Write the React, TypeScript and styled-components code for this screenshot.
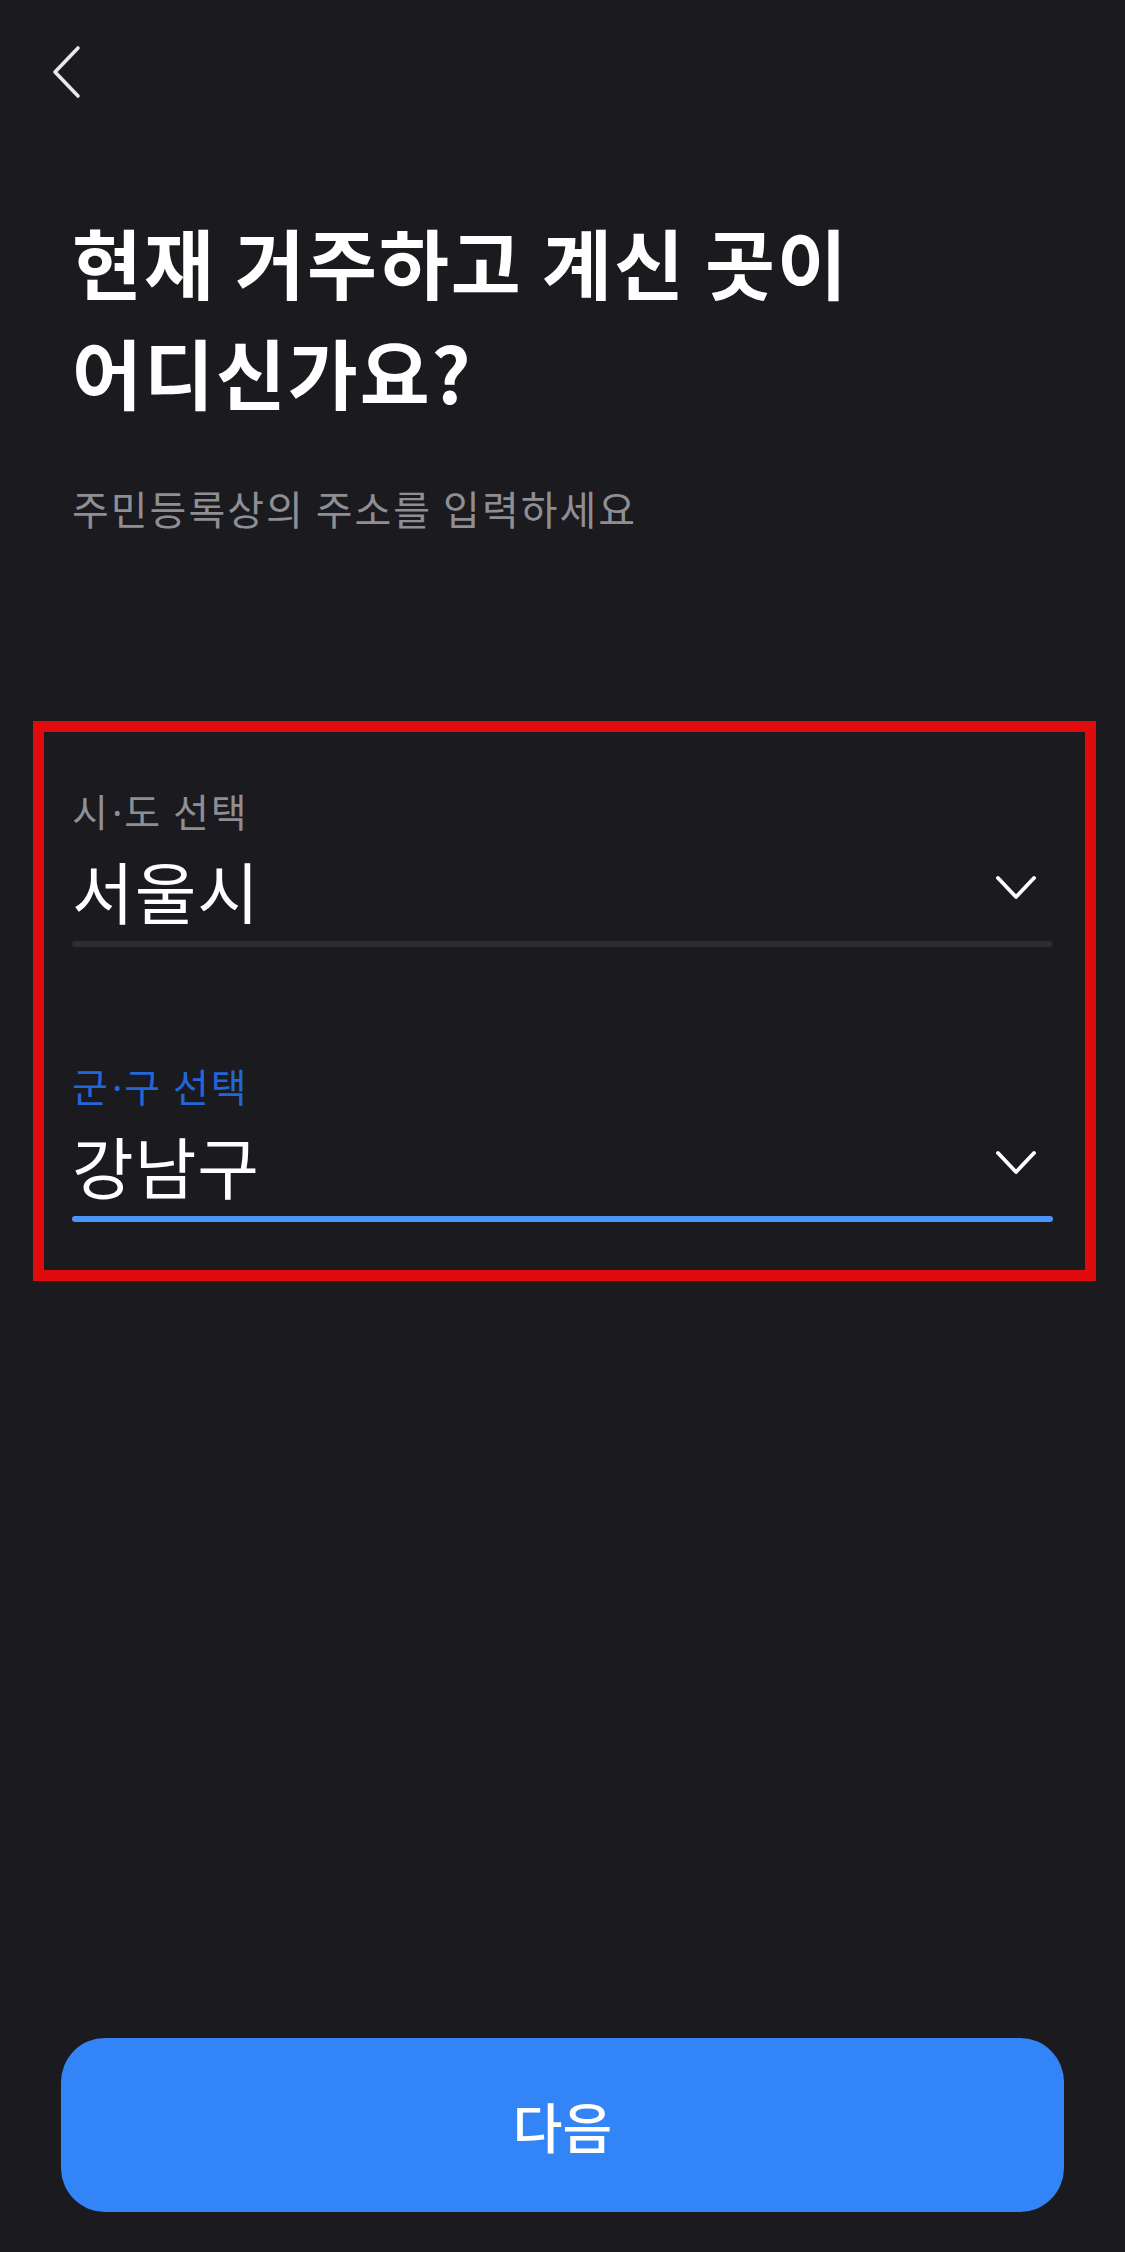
import React from "react";
import styled, { createGlobalStyle } from "styled-components";

const GlobalStyle = createGlobalStyle`
  html, body {
    margin: 0;
    padding: 0;
    background: #1a1a1f;
  }
  body {
    font-family: "Noto Sans CJK KR", "Noto Sans", sans-serif;
    color: #ffffff;
  }
`;

type Field = { region: string; kind: string; value: string; active?: boolean };

const fields: Field[] = [
  { region: "시", kind: "도", value: "서울시" },
  { region: "군", kind: "구", value: "강남구", active: true },
];

function BackIcon() {
  return (
    <svg width="30" height="54" viewBox="0 0 30 54" fill="none">
      <path
        d="M26 3 L3 27 L26 51"
        stroke="#e9e9ec"
        strokeWidth="3.6"
        strokeLinecap="round"
        strokeLinejoin="round"
      />
    </svg>
  );
}

function ChevronDown() {
  return (
    <svg width="42" height="26" viewBox="0 0 42 26" fill="none">
      <path
        d="M3 3 L21 22 L39 3"
        stroke="#ffffff"
        strokeWidth="3.8"
        strokeLinecap="round"
        strokeLinejoin="round"
      />
    </svg>
  );
}

export default function App() {
  return (
    <>
      <GlobalStyle />
      <Page>
        <Header>
          <BackButton aria-label="뒤로">
            <BackIcon />
          </BackButton>
        </Header>

        <Title>
          현재 거주하고 계신 곳이
          <br />
          어디신가요?
        </Title>
        <Subtitle>주민등록상의 주소를 입력하세요</Subtitle>

        <Highlight>
          {fields.map((f) => (
            <FieldBlock key={f.region}>
              <Label $active={f.active}>
                {f.region}
                <Dot>·</Dot>
                {f.kind} 선택
              </Label>
              <ValueRow>
                <Value>{f.value}</Value>
                <ChevronSlot>
                  <ChevronDown />
                </ChevronSlot>
              </ValueRow>
              <Underline $active={f.active} />
            </FieldBlock>
          ))}
        </Highlight>

        <NextButton>다음</NextButton>
      </Page>
    </>
  );
}

const Page = styled.div`
  min-height: 100vh;
  display: flex;
  flex-direction: column;
  background: #1a1a1f;
`;

const Header = styled.div`
  display: flex;
  align-items: center;
  height: 100px;
  padding: 22px 0 0 52px;
`;

const BackButton = styled.button`
  display: flex;
  align-items: center;
  justify-content: center;
  padding: 0;
  border: none;
  background: none;
  cursor: pointer;
`;

const Title = styled.h1`
  margin: 84px 72px 0;
  font-size: 76px;
  font-weight: 700;
  line-height: 110px;
  letter-spacing: 2px;
  color: #ffffff;
`;

const Subtitle = styled.p`
  margin: 53px 72px 0;
  font-size: 40px;
  font-weight: 400;
  line-height: 58px;
  letter-spacing: 2px;
  color: #8e8e93;
`;

const Highlight = styled.div`
  margin: 184px 29px 0 33px;
  border: 11px solid #e00b0b;
  padding: 49px 32px 48px 28px;
  display: flex;
  flex-direction: column;
  gap: 109px;
`;

const FieldBlock = styled.div`
  display: flex;
  flex-direction: column;
`;

const Label = styled.div<{ $active?: boolean }>`
  font-size: 39px;
  line-height: 58px;
  letter-spacing: 2px;
  color: ${({ $active }) => ($active ? "#2266d8" : "#8e8e93")};
`;

const Dot = styled.span`
  font-family: "Noto Sans", sans-serif;
  letter-spacing: 0;
  margin: 0 2px;
`;

const ValueRow = styled.div`
  display: flex;
  align-items: center;
  justify-content: space-between;
  height: 97px;
  padding-right: 16px;
`;

const Value = styled.span`
  font-size: 67px;
  font-weight: 400;
  letter-spacing: 1px;
  line-height: 97px;
  color: #ffffff;
`;

const ChevronSlot = styled.span`
  display: flex;
  margin-bottom: 4px;
`;

const Underline = styled.div<{ $active?: boolean }>`
  height: 6px;
  margin-top: 3px;
  border-radius: 3px;
  background: ${({ $active }) => ($active ? "#4a95f8" : "#2c2c34")};
`;

const NextButton = styled.button`
  margin: auto 61px 40px;
  height: 174px;
  border: none;
  border-radius: 44px;
  background: #3384f6;
  color: #ffffff;
  font-family: "Noto Sans CJK KR", "Noto Sans", sans-serif;
  font-size: 54px;
  font-weight: 500;
  letter-spacing: 0;
  cursor: pointer;
`;
